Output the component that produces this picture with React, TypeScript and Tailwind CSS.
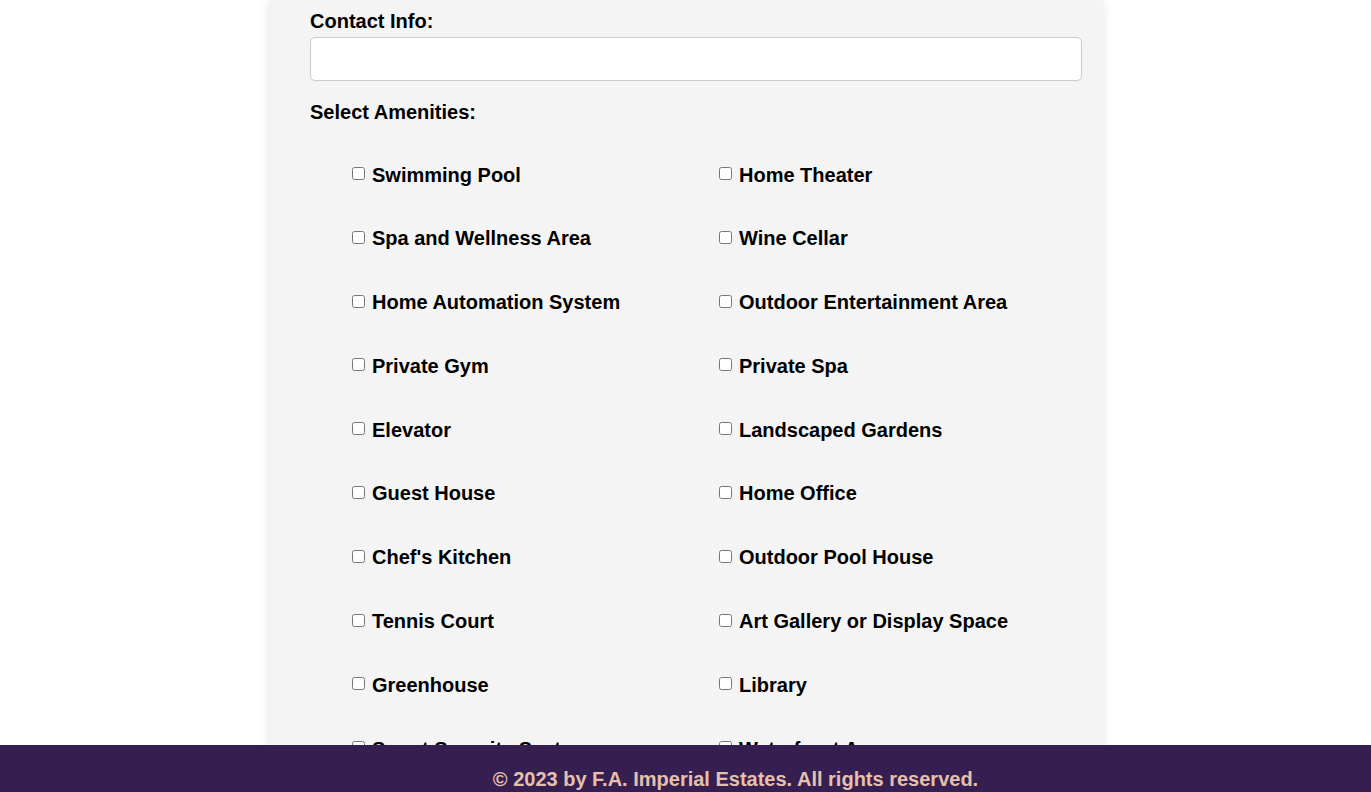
const amenities: [string, string][] = [
  ["Swimming Pool", "Home Theater"],
  ["Spa and Wellness Area", "Wine Cellar"],
  ["Home Automation System", "Outdoor Entertainment Area"],
  ["Private Gym", "Private Spa"],
  ["Elevator", "Landscaped Gardens"],
  ["Guest House", "Home Office"],
  ["Chef's Kitchen", "Outdoor Pool House"],
  ["Tennis Court", "Art Gallery or Display Space"],
  ["Greenhouse", "Library"],
  ["Smart Security System", "Waterfront Access"],
];

function Amenity({ name }: { name: string }) {
  return (
    <label className="flex items-start text-[20px] font-bold leading-[23px] text-black">
      <input type="checkbox" className="m-0 ml-[4px] mr-[7px] mt-[3.5px] h-[13px] w-[13px] shrink-0" />
      <span>{name}</span>
    </label>
  );
}

export default function App() {
  return (
    <div className="min-h-screen bg-white font-['Liberation_Sans',Arial,sans-serif]">
      <div className="mx-auto w-[834px] bg-[#f4f4f4] pl-[41.5px] pr-[20.5px] pt-[10px] pb-[120px] shadow-[0_0_10px_rgba(0,0,0,0.1)]">
        <label className="block text-[20px] font-bold leading-[23px] text-black">Contact Info:</label>
        <input
          type="text"
          className="mt-[4px] block h-[44px] w-full rounded-[5px] border border-[#cccccc] bg-white px-2"
        />
        <p className="mt-[20px] text-[20px] font-bold leading-[23px] text-black">Select Amenities:</p>
        <div className="mt-[39.5px] grid grid-cols-2 gap-y-[40.8px] pl-[38px]">
          {amenities.flatMap(([a, b]) => [<Amenity key={a} name={a} />, <Amenity key={b} name={b} />])}
        </div>
      </div>
      <footer className="fixed bottom-0 left-0 right-0 h-[47px] bg-[#351f51] pl-[100px] pt-[23px] text-center text-[20px] font-bold leading-[23px] text-[#e6c0ad]">
        © 2023 by F.A. Imperial Estates. All rights reserved.
      </footer>
    </div>
  );
}
